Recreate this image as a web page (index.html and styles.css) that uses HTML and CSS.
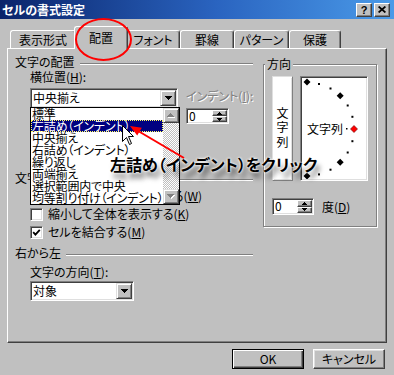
FILE: index.html
```html
<!DOCTYPE html>
<html lang="ja">
<head>
<meta charset="utf-8">
<title>セルの書式設定</title>
<link rel="stylesheet" href="styles.css">
</head>
<body>
<div class="win">
  <div class="titlebar">
    <span class="title">セルの書式設定</span>
    <div class="tbtns">
      <span class="tbtn help">?</span>
      <span class="tbtn close"><svg width="8" height="7" viewBox="0 0 8 7"><path d="M0.6 0.5L7.4 6.5M7.4 0.5L0.6 6.5" stroke="#000" stroke-width="1.7"/></svg></span>
    </div>
  </div>

  <div class="tabs">
    <div class="tab w66">表示形式</div>
    <div class="tab sel">配置</div>
    <div class="tab w54">フォント</div>
    <div class="tab w54">罫線</div>
    <div class="tab w55">パターン</div>
    <div class="tab w52">保護</div>
  </div>

  <div class="panel">
    <div class="leftcol">
      <div class="ghead"><span>文字の配置</span><i class="etch"></i></div>
      <div class="hrow">
        <div class="hcol">
          <div class="lbl">横位置(<u>H</u>):</div>
          <div class="combo">
            <span class="cval">中央揃え</span>
            <span class="dbtn"><svg width="7" height="4" viewBox="0 0 7 4"><path d="M0 0h7v1H6v1H5v1H4v1H3V3H2V2H1V1H0z" fill="#000"/></svg></span>
            <div class="dlist">
              <div class="items">
                <div class="it">標準</div>
                <div class="it hl">左詰め（インデント）</div>
                <div class="it">中央揃え</div>
                <div class="it">右詰め（インデント）</div>
                <div class="it">繰り返し</div>
                <div class="it">両端揃え</div>
                <div class="it">選択範囲内で中央</div>
                <div class="it">均等割り付け（インデント）</div>
              </div>
              <div class="lsb">
                <span class="sbtn"><svg width="8" height="5" viewBox="0 0 8 5"><path d="M4 1h1v1h1v1h1v1h1v1H1V4h1V3h1V2h1z" fill="#fff"/><path d="M3 0h1v1h1v1h1v1h1v1H0V3h1V2h1V1h1z" fill="#808080"/></svg></span>
                <span class="track"></span>
                <span class="sbtn"><svg width="8" height="5" viewBox="0 0 8 5"><path d="M1 1h7v1H7v1H6v1H5v1H4V4H3V3H2V2H1z" fill="#fff"/><path d="M0 0h7v1H6v1H5v1H4v1H3V3H2V2H1V1H0z" fill="#808080"/></svg></span>
              </div>
            </div>
          </div>
        </div>
        <div class="icol">
          <div class="lbl dis">インデント(<u>I</u>):</div>
          <div class="spin">
            <span class="sval">0</span>
            <span class="sbs">
              <span class="sb"><svg width="5" height="3" viewBox="0 0 5 3"><path d="M2 0h1v1h1v1h1v1H0V2h1V1h1z" fill="#000"/></svg></span>
              <span class="sb"><svg width="5" height="3" viewBox="0 0 5 3"><path d="M0 0h5v1H4v1H3v1H2V2H1V1H0z" fill="#000"/></svg></span>
            </span>
          </div>
        </div>
      </div>

      <div class="ghead g2"><span>文字の制御</span><i class="etch"></i></div>
      <div class="crow first"><span class="cb"></span><span>折り返して全体を表示する(<u>W</u>)</span></div>
      <div class="crow"><span class="cb"></span><span>縮小して全体を表示する(<u>K</u>)</span></div>
      <div class="crow"><span class="cb"><svg width="9" height="9" viewBox="0 0 9 9"><path d="M1.2 4.2L3.4 6.6L7.8 1.8" stroke="#000" stroke-width="1.8" fill="none"/></svg></span><span>セルを結合する(<u>M</u>)</span></div>

      <div class="ghead g3"><span>右から左</span><i class="etch"></i></div>
      <div class="lbl ind">文字の方向(<u>T</u>):</div>
      <div class="combo small">
        <span class="cval">対象</span>
        <span class="dbtn"><svg width="7" height="4" viewBox="0 0 7 4"><path d="M0 0h7v1H6v1H5v1H4v1H3V3H2V2H1V1H0z" fill="#000"/></svg></span>
      </div>
    </div>

    <div class="group">
      <span class="legend">方向</span>
      <div class="orow">
        <div class="vbox"><span class="vtext">文字列</span></div>
        <div class="abox">
          <svg width="64" height="101" viewBox="0 0 64 101">
            <g fill="#000">
              <polygon points="5,0.5 8.5,4 5,7.5 1.5,4"/>
              <rect x="16" y="5" width="2" height="2"/>
              <rect x="27.5" y="9.5" width="2" height="2"/>
              <polygon points="38.2,14.3 41.7,17.8 38.2,21.3 34.7,17.8"/>
              <rect x="44.7" y="26.5" width="2" height="2"/>
              <rect x="49.4" y="37.8" width="2" height="2"/>
              <rect x="44" y="50" width="1.5" height="1.5"/>
              <rect x="49.4" y="62.2" width="2" height="2"/>
              <rect x="44.7" y="73.5" width="2" height="2"/>
              <polygon points="38.2,80.7 41.7,84.2 38.2,87.7 34.7,84.2"/>
              <rect x="27.5" y="90.7" width="2" height="2"/>
              <rect x="16" y="95.4" width="2" height="2"/>
              <polygon points="5,94.5 8.5,98 5,101.5 1.5,98"/>
            </g>
            <polygon points="52,47.5 55.5,51 52,54.5 48.5,51" fill="#f00" stroke="#600" stroke-width="0.6"/>
            <text x="5" y="55.5" class="atext">文字列</text>
          </svg>
        </div>
      </div>
      <div class="drow">
        <div class="spin deg">
          <span class="sval">0</span>
          <span class="sbs">
            <span class="sb"><svg width="5" height="3" viewBox="0 0 5 3"><path d="M2 0h1v1h1v1h1v1H0V2h1V1h1z" fill="#000"/></svg></span>
            <span class="sb"><svg width="5" height="3" viewBox="0 0 5 3"><path d="M0 0h5v1H4v1H3v1H2V2H1V1H0z" fill="#000"/></svg></span>
          </span>
        </div>
        <span>度(<u>D</u>)</span>
      </div>
    </div>
  </div>

  <div class="btns">
    <span class="btn def">OK</span>
    <span class="btn">キャンセル</span>
  </div>

  <div class="ellipse"></div>
  <div class="note">左詰め（インデント）をクリック</div>
  <svg class="arrow" width="394" height="375" viewBox="0 0 394 375">
    <line x1="184" y1="158" x2="139" y2="131.5" stroke="#f00" stroke-width="2"/>
    <polygon points="130,126 137.2,135.4 141.8,127.7" fill="#f00"/>
  </svg>
  <svg class="cursor" width="14" height="22" viewBox="0 0 14 22">
    <path d="M1.5 1.5V17.5L5.5 13.5L8.5 20.5L10.5 19.5L7.5 12.5H12.5Z" fill="#fff" stroke="#000" stroke-width="1" stroke-linejoin="miter"/>
  </svg>
</div>
</body>
</html>
```

FILE: styles.css
```css
* { box-sizing: border-box; }
html, body { margin: 0; padding: 0; }
body {
  background: #c0c0c0;
  font-family: "Noto Sans CJK JP", "Noto Sans", sans-serif;
  font-size: 12px;
  line-height: 14px;
  color: #000;
  font-feature-settings: "palt";
}
u { text-decoration: underline; text-underline-offset: 1px; }

.win {
  position: relative;
  width: 394px;
  height: 375px;
  overflow: hidden;
  background: #c0c0c0;
}

/* title bar */
.titlebar {
  height: 19px;
  display: flex;
  align-items: center;
  padding: 0 4px 0 2px;
  background: linear-gradient(90deg, #0a246a 0%, #2a64c0 55%, #4a9ae8 100%);
}
.title { color: #fff; font-weight: bold; font-size: 12px; line-height: 16px; }
.tbtns { margin-left: auto; display: flex; gap: 2px; }
.tbtn {
  width: 16px; height: 14px;
  display: flex; align-items: center; justify-content: center;
  background: #c0c0c0;
  border: 1px solid; border-color: #fff #404040 #404040 #fff;
  box-shadow: inset -1px -1px #808080;
  font-family: "Liberation Sans", sans-serif;
  font-weight: bold; font-size: 11px; line-height: 12px;
}

/* tabs */
.tabs { display: flex; align-items: flex-end; height: 29px; padding-left: 10px; }
.tab {
  height: 18px;
  display: flex; align-items: center; justify-content: center;
  border: 1px solid #fff; border-bottom: none; border-right-color: #404040;
  border-radius: 3px 3px 0 0;
  box-shadow: inset -1px 0 #808080;
  background: #c0c0c0;
  white-space: nowrap;
}
.w66 { width: 66px; }
.w54 { width: 54px; }
.w55 { width: 55px; }
.w52 { width: 52px; }
.tab.sel {
  width: 54px; height: 23px;
  margin: 0 -2px -1px;
  position: relative; z-index: 2;
  padding-bottom: 1px;
}

/* panel */
.panel {
  position: relative; z-index: 1;
  margin-left: 7px;
  width: 380px; height: 295px;
  border: 1px solid; border-color: #fff #404040 #404040 #fff;
  box-shadow: inset -1px -1px #808080;
  display: flex; gap: 10px;
  padding: 6px 0 0 7px;
}
.leftcol { width: 238px; display: flex; flex-direction: column; align-items: flex-start; }
.ghead { display: flex; align-items: center; height: 14px; gap: 5px; width: 100%; }
.etch { flex: 1; height: 2px; margin-top: 3px; border-top: 1px solid #808080; border-bottom: 1px solid #fff; }
.g2 { margin-top: 47px; }
.g3 { margin-top: 5px; }
.lbl { height: 14px; line-height: 14px; white-space: nowrap; }
.lbl.ind { margin: 5px 0 0 15px; }
.dis { color: #808080; text-shadow: 1px 1px 0 #fff; }

.hrow { display: flex; margin: 1px 0 0 15px; }
.hcol { width: 148px; display: flex; flex-direction: column; }
.icol { margin-left: 8px; padding-top: 19px; display: flex; flex-direction: column; }

/* combo */
.combo {
  position: relative;
  margin-top: 4px;
  height: 20px;
  background: #fff;
  border: 1px solid; border-color: #808080 #fff #fff #808080;
  box-shadow: inset 1px 1px #404040, inset -1px -1px #dfdfdf;
  display: flex; align-items: center;
  padding: 1px 1px 1px 2px;
}
.combo.small { width: 104px; margin: 2px 0 0 15px; }
.cval { flex: 1; line-height: 14px; white-space: nowrap; }
.dbtn {
  width: 16px; height: 16px;
  display: flex; align-items: center; justify-content: center;
  background: #c0c0c0;
  border: 1px solid; border-color: #dfdfdf #404040 #404040 #dfdfdf;
  box-shadow: inset 1px 1px #fff, inset -1px -1px #808080;
}

/* dropdown list */
.dlist {
  position: absolute; left: -1px; top: 18px; z-index: 5;
  width: 150px; height: 98px;
  background: #fff;
  border: 1px solid #000;
  display: flex;
}
.items { flex: 1; min-width: 0; }
.it { height: 12px; line-height: 12px; padding-left: 1px; white-space: nowrap; letter-spacing: -0.2px; }
.it.hl { background: #000080; color: #fff; outline: 1px dotted #ffff60; outline-offset: -1px; }
.lsb {
  width: 16px; flex: none;
  display: flex; flex-direction: column;
  background: repeating-conic-gradient(#fff 0 25%, #c0c0c0 0 50%) 0 0 / 2px 2px;
}
.sbtn {
  height: 15px;
  display: flex; align-items: center; justify-content: center;
  background: #c0c0c0;
  border: 1px solid; border-color: #dfdfdf #404040 #404040 #dfdfdf;
  box-shadow: inset 1px 1px #fff, inset -1px -1px #808080;
}
.track { flex: 1; }

/* spinner */
.spin {
  margin-top: 5px;
  width: 43px; height: 16px;
  display: flex;
  background: #fff;
  border: 1px solid; border-color: #808080 #fff #fff #808080;
  box-shadow: inset 1px 1px #404040, inset -1px -1px #dfdfdf;
  padding: 1px;
}
.sval { flex: 1; padding-left: 1px; line-height: 12px; font-size: 12px; }
.sbs { width: 15px; display: flex; flex-direction: column; }
.sb {
  flex: 1;
  display: flex; align-items: center; justify-content: center;
  background: #c0c0c0;
  border: 1px solid; border-color: #fff #404040 #404040 #fff;
  box-shadow: inset -1px -1px #808080;
}
.spin.deg { margin-top: 0; width: 42px; height: 17px; }

/* checkboxes */
.crow { display: flex; align-items: center; gap: 5px; height: 18px; margin-left: 15px; white-space: nowrap; }
.crow.first { margin-top: 2px; }
.cb {
  width: 13px; height: 13px; flex: none;
  background: #fff;
  border: 1px solid; border-color: #808080 #fff #fff #808080;
  box-shadow: inset 1px 1px #404040, inset -1px -1px #dfdfdf;
  display: flex; align-items: center; justify-content: center;
}

/* orientation group */
.group {
  width: 114px; height: 163px;
  margin-top: 9px;
  border: 1px solid #808080;
  box-shadow: inset 1px 1px #fff, 1px 1px #fff;
  padding-left: 8px;
}
.legend {
  display: block; width: fit-content;
  height: 14px; line-height: 14px;
  margin: -8px 0 0 -7px; padding: 0 2px;
  background: #c0c0c0;
}
.orow { display: flex; gap: 7px; margin-top: 5px; height: 105px; }
.vbox {
  width: 21px;
  background: #fff;
  border: 1px solid; border-color: #dfdfdf #808080 #808080 #dfdfdf;
  box-shadow: inset 1px 1px #fff, inset -1px -1px #dfdfdf;
  display: flex; align-items: center; justify-content: center;
}
.vtext { writing-mode: vertical-rl; letter-spacing: 2.5px; line-height: 19px; font-size: 12px; }
.abox {
  width: 68px;
  background: #fff;
  border: 1px solid; border-color: #808080 #fff #fff #808080;
  box-shadow: inset 1px 1px #404040, inset -1px -1px #dfdfdf;
  padding: 1px;
}
.abox svg { display: block; }
.atext { font-family: "Noto Sans CJK JP", sans-serif; font-size: 12px; fill: #000; }
.drow { display: flex; align-items: center; gap: 8px; margin-top: 17px; }

/* dialog buttons */
.btns { display: flex; justify-content: flex-end; gap: 9px; padding-right: 9px; margin-top: 6px; }
.btn {
  width: 72px; height: 20px;
  display: flex; align-items: center; justify-content: center;
  background: #c0c0c0;
  border: 1px solid; border-color: #fff #404040 #404040 #fff;
  box-shadow: inset -1px -1px #808080, inset 1px 1px #dfdfdf;
}
.btn.def {
  border-color: #000;
  box-shadow: inset 1px 1px #fff, inset -1px -1px #404040, inset -2px -2px #808080;
}

/* overlays */
.ellipse {
  position: absolute; z-index: 10;
  left: 75px; top: 18px; width: 57px; height: 43px;
  border: 2px solid #f00;
  border-radius: 50%;
}
.note {
  position: absolute; z-index: 10;
  left: 110px; top: 155px;
  font-size: 16px; line-height: 19px; font-weight: bold;
  white-space: nowrap;
  text-shadow: 0 0 2px #fff, 0 0 3px #fff, 3px 6px 5px rgba(0,0,0,0.55);
}
.arrow { position: absolute; left: 0; top: 0; z-index: 11; }
.cursor { position: absolute; left: 121px; top: 124px; z-index: 12; }
```
